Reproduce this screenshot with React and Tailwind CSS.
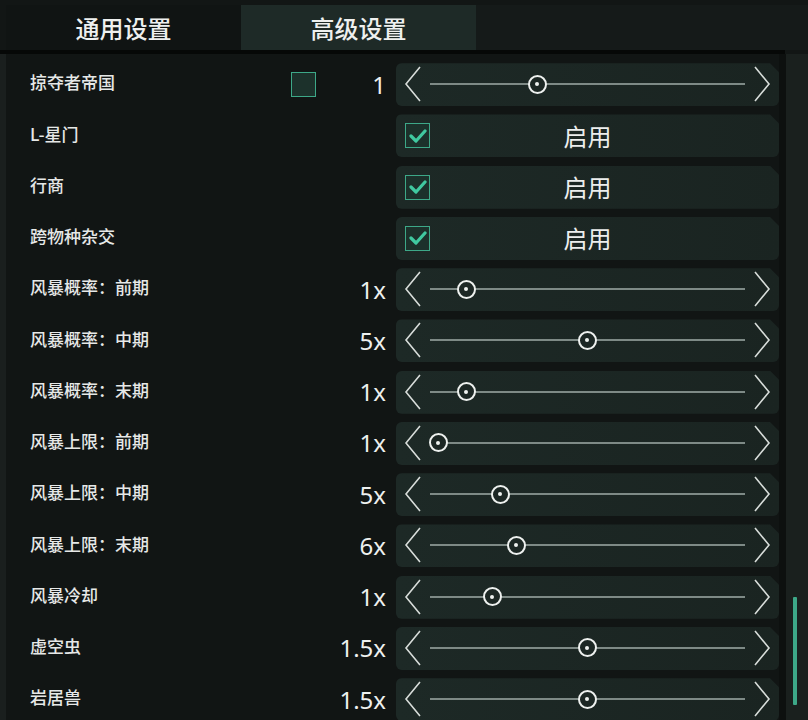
import React from "react";

const rows = [
  { label: "掠夺者帝国", type: "slider", value: "1", knob: 537, check: true },
  { label: "L-星门", type: "toggle" },
  { label: "行商", type: "toggle" },
  { label: "跨物种杂交", type: "toggle" },
  { label: "风暴概率：前期", type: "slider", value: "1x", knob: 466 },
  { label: "风暴概率：中期", type: "slider", value: "5x", knob: 587 },
  { label: "风暴概率：末期", type: "slider", value: "1x", knob: 466 },
  { label: "风暴上限：前期", type: "slider", value: "1x", knob: 438 },
  { label: "风暴上限：中期", type: "slider", value: "5x", knob: 500 },
  { label: "风暴上限：末期", type: "slider", value: "6x", knob: 516 },
  { label: "风暴冷却", type: "slider", value: "1x", knob: 492 },
  { label: "虚空虫", type: "slider", value: "1.5x", knob: 587 },
  { label: "岩居兽", type: "slider", value: "1.5x", knob: 587 },
];

const font = { fontFamily: '"Noto Sans CJK SC", "Noto Sans", sans-serif' };

function Chevron({ dir }) {
  return (
    <svg width="18" height="36" viewBox="0 0 18 36" className="shrink-0">
      <polyline
        points={dir === "left" ? "16,1 2,18 16,35" : "2,1 16,18 2,35"}
        fill="none"
        stroke="#d7dcd9"
        strokeWidth="1.6"
        strokeLinejoin="miter"
      />
    </svg>
  );
}

function Box({ children }) {
  return (
    <div
      className="relative w-[383px] h-[43px] flex items-center rounded-l-[6px] rounded-br-[6px] bg-gradient-to-r from-[#1d2926] to-[#1a2421]"
      style={{ clipPath: "polygon(0 0, calc(100% - 9px) 0, 100% 9px, 100% 100%, 0 100%)" }}
    >
      {children}
    </div>
  );
}

function CheckBox({ checked }) {
  return (
    <div className="w-[25px] h-[25px] border-[1.5px] border-[#3da888] bg-[#1c312b] flex items-center justify-center">
      {checked && (
        <svg width="18" height="14" viewBox="0 0 18 14">
          <polyline points="2,7 7,12 16,2" fill="none" stroke="#40c9a0" strokeWidth="3.2" strokeLinecap="round" strokeLinejoin="round" />
        </svg>
      )}
    </div>
  );
}

function Slider({ knob }) {
  const left = knob - 396;
  return (
    <Box>
      <div className="absolute left-[8px] top-[3px]">
        <Chevron dir="left" />
      </div>
      <div className="absolute left-[34px] right-[34px] top-[20px] h-[2px] bg-[#7e8a86]" />
      <div
        className="absolute top-[11.5px] w-[19px] h-[19px] rounded-full border-[2.5px] border-[#eef1ef] bg-[#1c2724] flex items-center justify-center"
        style={{ left: left - 9.5 }}
      >
        <div className="w-[4px] h-[4px] rounded-full bg-[#eef1ef]" />
      </div>
      <div className="absolute right-[8px] top-[3px]">
        <Chevron dir="right" />
      </div>
    </Box>
  );
}

function Toggle() {
  return (
    <Box>
      <div className="absolute left-[9px] top-[9px]">
        <CheckBox checked />
      </div>
      <div className="w-full text-center text-[24px] text-[#eceeed] leading-none" style={font}>
        启用
      </div>
    </Box>
  );
}

export default function App() {
  return (
    <div className="w-[808px] h-[720px] overflow-hidden bg-[#121615] relative" style={font}>
      <div className="flex pl-[6px] pt-[5px] h-[50px]">
        <div className="w-[235px] h-[45px] bg-[#101413] flex items-center justify-center text-[24px] font-medium text-[#eef0ef]">
          通用设置
        </div>
        <div className="w-[235px] h-[45px] bg-[#1e2a27] flex items-center justify-center text-[24px] font-medium text-[#eef0ef]">
          高级设置
        </div>
        <div className="flex-1 h-[45px] bg-[#151a19]" />
      </div>
      <div className="h-[4px] w-[785px] bg-[#060807]" />
      <div className="flex">
        <div className="w-[6px] bg-[#1a1f1e]" />
        <div className="flex-1 flex flex-col gap-[8px] pt-[9px] bg-[#111514]">
          {rows.map((r, i) => (
            <div key={i} className="flex items-center h-[43.25px] shrink-0">
              <div className="flex-1 flex items-center pl-[24px] h-full">
                <div className="flex-1 text-[17px] font-medium text-[#e6e8e7] -mt-[5px]">{r.label}</div>
                {r.check && <CheckBox />}
              </div>
              <div className="w-[70px] text-right text-[24px] text-[#eef0ef] leading-none" style={{ fontFamily: '"Noto Sans", sans-serif' }}>
                {r.value || ""}
              </div>
              <div className="ml-[10px]">
                {r.type === "slider" ? <Slider knob={r.knob} /> : <Toggle />}
              </div>
            </div>
          ))}
        </div>
        <div className="w-[29px] self-stretch flex">
          <div className="w-[7px] bg-[#0d100f]" />
          <div className="flex-1 bg-[#1a201e] relative">
            <div className="absolute left-[7px] top-[543px] w-[4px] h-[108px] bg-[#3da888] rounded-[1px]" />
          </div>
        </div>
      </div>
    </div>
  );
}
